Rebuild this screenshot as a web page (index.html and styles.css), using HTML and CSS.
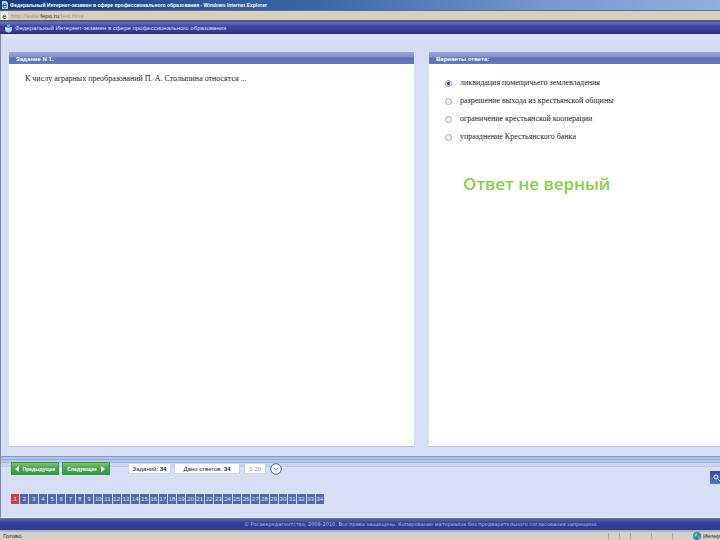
FILE: index.html
```html
<!DOCTYPE html>
<html lang="ru">
	<head>
		<meta charset="UTF-8">
		<title>Федеральный Интернет-экзамен в сфере профессионального образования</title>
		<link rel="stylesheet" href="styles.css">
		<script src="script.js" defer></script>
	</head>

	<body>
		<div class="titlebar">
			<svg class="page-icon" viewBox="0 0 7 8"><path d="M1 0h4l2 2v6H1z" fill="#b8d4f4"/><path d="M2 4.500h3.500M2 4.500a1.700 1.700 0 1 1 3.500 0M2 4.500a1.700 1.700 0 0 0 3.500 1" fill="none" stroke="#2060a8"/></svg>
			<span>Федеральный Интернет-экзамен в сфере профессионального образования - Windows Internet Explorer</span>
		</div>
		<div class="address">
			<svg class="page-icon" viewBox="0 0 7 8"><path d="M0 0h7v8H0z" fill="#f4f8ee"/><path d="M2 4.500h3M2 4.500a1.500 1.500 0 1 1 3 0M2 4.500a1.500 1.500 0 0 0 3 1" fill="none" stroke="#3b8a45"/></svg>
			<span>http://www.<b>fepo.ru</b>/test.html</span>
		</div>
		<div class="header">
			<svg class="logo" viewBox="0 0 9 10"><path d="M1 4h7v2a3.500 3.500 0 0 1-7 0z" fill="#9fd4fa"/><path d="M3 1h3v4H3z" fill="#5b9be6"/><path d="M2 6h4" stroke="#fff"/></svg>
			<h1>Федеральный Интернет-экзамен в сфере профессионального образования</h1>
		</div>

		<div class="main">
			<div class="panel task">
				<h2>Задание N 1.</h2>
				<div class="box">
					<p>К числу аграрных преобразований П. А. Столыпина относятся ...</p>
				</div>
			</div>
			<div class="panel answers">
				<h2>Варианты ответа:</h2>
				<div class="box">
					<label><input type="radio" name="answer" checked>ликвидация помещичьего землевладения</label>
					<label><input type="radio" name="answer">разрешение выхода из крестьянской общины</label>
					<label><input type="radio" name="answer">ограничение крестьянской кооперации</label>
					<label><input type="radio" name="answer">упразднение Крестьянского банка</label>
					<div class="result">Ответ не верный</div>
				</div>
			</div>
		</div>

		<div class="bottom">
			<div class="tools">
				<button class="btn" type="button"><svg viewBox="0 0 4 6"><path d="M4 0v6L0 3z" fill="#fff"/></svg>Предыдущее</button>
				<button class="btn" type="button">Следующее<svg viewBox="0 0 4 6"><path d="M0 0v6l4-3z" fill="#fff"/></svg></button>
				<span class="count total">Заданий: <b>34</b></span>
				<span class="count given">Дано ответов: <b>34</b></span>
				<span class="count time">1:20</span>
				<button class="clock" type="button" aria-label="Время"><svg viewBox="0 0 12 12"><circle cx="6" cy="6" r="5.300" fill="#f2f6ff" stroke="#4a62a8"/><path d="M4 5l2 2 2-2" fill="none" stroke="#93a9d0"/></svg></button>
			</div>
			<div class="numbers"></div>
			<button class="help" type="button" aria-label="Помощь"><svg viewBox="0 0 10 12"><circle cx="6" cy="5" r="2" fill="none" stroke="#fff"/><path d="M8 7l2 2" stroke="#fff"/></svg></button>
		</div>

		<div class="footer">© Росаккредагентство, 2008-2010. Все права защищены. Копирование материалов без предварительного согласования запрещено.</div>
		<div class="status">
			<span class="ready">Готово</span>
			<i></i><i></i><i></i><i></i><i></i>
			<span class="zone"><svg viewBox="0 0 8 8"><circle cx="4" cy="4" r="4" fill="#2a86b5"/><path d="M1 3l2-2 2 1-1 2-2 1zM5 4l2 1-2 2z" fill="#7fcb9a"/></svg>Интер</span>
		</div>
	</body>

</html>
```
FILE: styles.css
```css
body,
h1,
h2,
p {
	margin: 0;
	padding: 0;
}

* {
	box-sizing: border-box;
}

body {
	display: flex;
	flex-direction: column;
	min-height: 100vh;
	overflow-x: hidden;
	background: #d6def5;
	font-family: "Liberation Sans", Arial, sans-serif;
	font-size: 6px;
	line-height: 8px;
	color: #222;
}

svg {
	display: block;
	flex: none;
}

button {
	font-family: inherit;
	font-size: 6px;
	line-height: 8px;
	border: 0;
	padding: 0;
}

/*top bars*/
.titlebar,
.address,
.header {
	display: flex;
	align-items: center;
	white-space: nowrap;
}

.titlebar {
	height: 11px;
	padding-left: 1px;
	gap: 2px;
	background: linear-gradient(to right, #143a7c, #3c68a8 45%, #7397cf 75%, #8db2df);
	border-bottom: 1px solid #66698c;
	color: #fff;
	font-size: 5px;
	font-weight: bold;
}

.page-icon {
	width: 7px;
	height: 8px;
}

.address {
	height: 11px;
	padding-left: 1px;
	gap: 3px;
	background: #d8cfc0;
	border-bottom: 2px solid #55588a;
	color: #9a9488;
}

.address b {
	font-weight: normal;
	color: #333;
}

.header {
	height: 12px;
	padding-left: 4px;
	gap: 2px;
	background: linear-gradient(#6a76c0, #3b3f9b 40%, #343a94 85%, #1f2468);
	color: #dfe6ff;
}

.header h1 {
	font-size: 6px;
	font-weight: normal;
}

.logo {
	width: 9px;
	height: 10px;
}

/*panels*/
.main {
	flex: 1;
	display: flex;
	gap: 15px;
	padding: 18px 0 9px 8px;
	border-left: 1px solid #7c89a8;
	background: linear-gradient(#dde2fc, #d3dcf2 8px, #d6def5 30px);
}

.panel {
	display: flex;
	flex-direction: column;
}

.task {
	flex: 405;
}

.answers {
	flex: 291;
}

.panel h2 {
	height: 12px;
	padding: 2px 7px;
	background: linear-gradient(#99a6d4, #8192c8 40%, #5c70b2 50%, #6679b8);
	color: #fff;
	font-size: 6px;
	line-height: 10px;
}

.box {
	flex: 1;
	background: #fff;
	border-bottom: 1px solid #bcc6dc;
	font-family: "Liberation Serif", "Times New Roman", serif;
	font-size: 8px;
	line-height: 10px;
}

.task .box {
	padding: 10px 16px;
}

.answers .box {
	display: flex;
	flex-direction: column;
	gap: 8px;
	padding: 14px 16px;
}

.answers label {
	display: flex;
	align-items: center;
	gap: 8px;
}

.answers input {
	appearance: none;
	width: 7px;
	height: 7px;
	margin: 0;
	border: 1px solid #a3acc4;
	border-radius: 50%;
	background: #eef1fa;
}

.answers input:checked {
	border-color: #8fa0cc;
	background: radial-gradient(#2f4a96 1px, #dfe6fa 2px);
}

.result {
	margin-top: 20px;
	padding-left: 18px;
	color: #87cf4a;
	font-family: "Open Sans", "Noto Sans", sans-serif;
	font-size: 17px;
	font-weight: 600;
	line-height: 28px;
}

/*bottom*/
.bottom {
	position: relative;
	height: 62px;
	padding: 6px 10px 0;
	border-left: 1px solid #7c89a8;
	border-bottom: 1px solid #eef2ff;
	background: linear-gradient(#7f9bcb 1px, #b2c4e6 1px, #b2c4e6 3px, #92abd6 3px, #92abd6 4px, #b9c8e9 4px, #b9c8e9 6px, #a3b7de 6px, #a3b7de 7px, #c9d5ef 7px, #c9d5ef 10px, #bccae6 10px, #bccae6 11px, #d6dff4 11px);
}

.tools {
	display: flex;
	align-items: center;
	height: 13px;
}

.btn {
	display: flex;
	align-items: center;
	justify-content: center;
	gap: 4px;
	width: 48px;
	height: 13px;
	margin-right: 3px;
	border: 1px solid #3f9046;
	background: linear-gradient(#76c673, #48a44b 50%, #3a9a3e);
	color: #fff;
	font-weight: bold;
	font-size: 5px;
}

.btn svg {
	width: 4px;
	height: 6px;
}

.count {
	height: 11px;
	background: #fff;
	border: 1px solid #ccd5e8;
	text-align: center;
	line-height: 10px;
}

.total {
	width: 43px;
	margin-left: 15px;
}

.given {
	width: 66px;
	margin-left: 3px;
}

.time {
	width: 22px;
	margin-left: 4px;
	color: #9a9a9a;
}

.clock {
	width: 12px;
	height: 12px;
	margin-left: 4px;
	background: none;
}

.numbers {
	display: flex;
	gap: 1px;
	width: 313px;
	margin-top: 19px;
}

.numbers a {
	flex: 1;
	height: 10px;
	background: #5368ac;
	color: #dfe6fb;
	text-align: center;
	text-decoration: none;
	line-height: 10px;
}

.numbers a.active {
	background: #d33c3c;
	color: #fff;
}

.help {
	position: absolute;
	right: 0;
	top: 15px;
	width: 10px;
	height: 13px;
	background: linear-gradient(#3448a0, #4d78c8);
}

.footer {
	height: 12px;
	padding-left: 122px;
	background: linear-gradient(#6470b8, #363f98 40%, #303a90);
	color: #b5bfec;
	font-family: "DejaVu Sans", Verdana, sans-serif;
	font-size: 5px;
	text-align: center;
	white-space: nowrap;
	line-height: 13px;
}

.status {
	display: flex;
	align-items: center;
	height: 10px;
	border-top: 2px solid #b0b2c4;
	background: #d2d2c6;
	padding-left: 3px;
	overflow: hidden;
}

.ready {
	flex: 1;
}

.status i {
	width: 11px;
	height: 7px;
	border-left: 1px solid #aaa99c;
}

.status i:nth-of-type(n+3) {
	width: 21px;
}

.zone {
	display: flex;
	gap: 2px;
}

.zone svg {
	width: 8px;
	height: 8px;
}
```
FILE: script.js
```js
//номера заданий
var numbers=document.querySelector(".numbers");
var html='';
for(var i=1;i<=34;i++){
	var cl=i==1?'active':'';
	html+='<a class="'+cl+'" href="?n='+i+'">'+i+'</a>';
}
numbers.innerHTML=html;
```
